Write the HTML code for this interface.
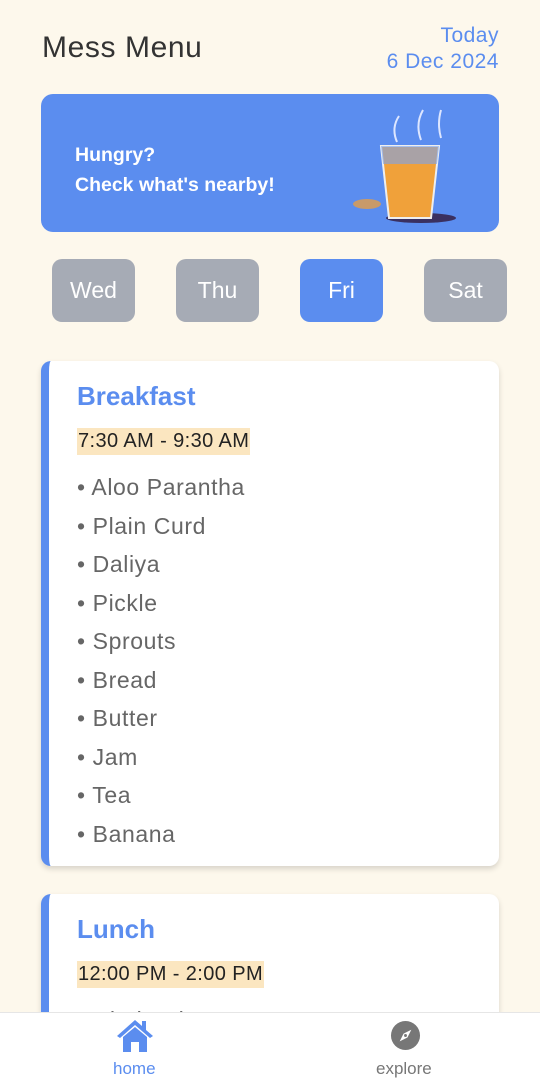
<!DOCTYPE html>
<html><head><meta charset="utf-8"><style>
*{margin:0;padding:0;box-sizing:border-box}
html,body{width:540px;height:1079px;overflow:hidden}
body{background:#fdf8ec;font-family:"Liberation Sans",sans-serif;position:relative}
.h1{position:absolute;left:42px;top:31px;font-size:30px;color:#333;letter-spacing:.6px}
.date{position:absolute;right:41px;top:23px;text-align:right;color:#5b8def;font-size:21px;line-height:26px;letter-spacing:.5px}
.banner{position:absolute;left:41px;top:94px;width:458px;height:138px;background:#5b8def;border-radius:12px;overflow:hidden}
.banner .t{position:absolute;left:34px;top:46px;color:#fff;font-weight:bold;font-size:19.5px;line-height:30px}
.day{position:absolute;top:259px;width:83px;height:63px;border-radius:10px;background:#a6abb5;color:#fff;font-size:23px;text-align:center;line-height:63px}
.card{position:absolute;left:41px;width:458px;background:#fff;border-radius:10px;border-left:8px solid #5b8def;box-shadow:0 3px 6px rgba(0,0,0,.15)}
.card h2{position:absolute;left:28px;top:20px;font-size:26px;color:#5b8def}
.time{position:absolute;left:28px;top:67px;background:#fbe6c0;font-size:20px;color:#222;padding:2px 1px;line-height:23px;letter-spacing:.4px}
.items{position:absolute;left:28px;top:107px;font-size:23px;color:#666;line-height:38.5px;letter-spacing:.6px}
.nav{position:absolute;left:0;top:1012px;width:540px;height:67px;background:#fff;border-top:1px solid #e6e6e6}
.nav span{position:absolute;top:46px;font-size:17px}
</style></head><body>
<div class="h1">Mess Menu</div>
<div class="date">Today<br>6 Dec 2024</div>
<div class="banner"><div class="t">Hungry?<br>Check what's nearby!</div>
<svg style="position:absolute;left:290px;top:0" width="168" height="138">
<ellipse cx="36" cy="110" rx="14" ry="5" fill="#c89a6a"/>
<ellipse cx="90" cy="124" rx="35" ry="5" fill="#3a3060"/>
<path d="M50 52 L108 52 L100 124 L58 124 Z" fill="#f0a13a" stroke="#eee" stroke-width="2"/>
<path d="M50 52 L108 52 L106 70 L52 70 Z" fill="#7aa3ee" opacity=".6"/>
<path d="M66 48 q-6 -14 2 -26 M90 46 q-6 -16 2 -30 M110 44 q-4 -14 0 -28" stroke="#dde6ff" stroke-width="2" fill="none"/>
</svg></div>
<div class="day" style="left:52px">Wed</div>
<div class="day" style="left:176px">Thu</div>
<div class="day" style="left:300px;background:#5b8def">Fri</div>
<div class="day" style="left:424px">Sat</div>
<div class="card" style="top:361px;height:505px"><h2>Breakfast</h2><div class="time">7:30 AM - 9:30 AM</div>
<div class="items">• Aloo Parantha<br>• Plain Curd<br>• Daliya<br>• Pickle<br>• Sprouts<br>• Bread<br>• Butter<br>• Jam<br>• Tea<br>• Banana</div></div>
<div class="card" style="top:894px;height:200px"><h2>Lunch</h2><div class="time">12:00 PM - 2:00 PM</div>
<div class="items">• Chole Bhature</div></div>
<div class="nav">
<svg style="position:absolute;left:115px;top:5px" width="40" height="36" viewBox="0 0 40 36"><path d="M20 2 L2 18 L5 20 L20 7 L35 20 L38 18 L31 12 L31 3 L27 3 L27 8 Z" fill="#5b8def"/><path d="M8 19 L20 9 L32 19 L32 34 L24 34 L24 24 L16 24 L16 34 L8 34 Z" fill="#5b8def"/></svg>
<span style="left:113px;color:#5b8def">home</span>
<svg style="position:absolute;left:390px;top:7px" width="31" height="31" viewBox="0 0 32 32"><circle cx="16" cy="16" r="15" fill="#777"/><path d="M22 10 L18 18 L10 22 L14 14 Z" fill="#fff"/><circle cx="16" cy="16" r="1.5" fill="#777"/></svg>
<span style="left:376px;color:#777">explore</span>
</div>
</body></html>
